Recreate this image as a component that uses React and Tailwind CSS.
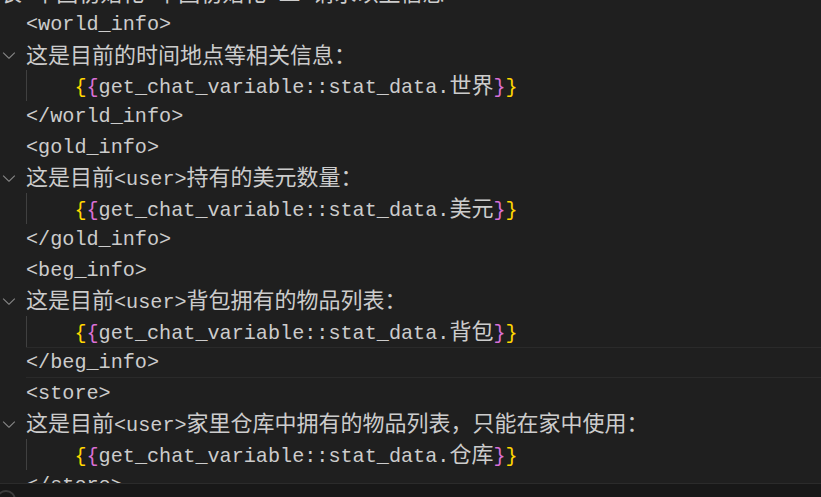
const CJK = /([\u3000-\u303f\u4e00-\u9fff\uff00-\uffef]+)/;

function Txt({ text }) {
    const parts = text.split(CJK).filter(Boolean);
    return parts.map((p, i) =>
        CJK.test(p) ? (
            <span key={i} className="font-['Noto_Sans_CJK_SC',sans-serif] text-[22px]">
                {p}
            </span>
        ) : (
            <span key={i} className="font-['Liberation_Mono',monospace] text-[20.17px]">
                {p}
            </span>
        )
    );
}

function Chevron() {
    return (
        <svg width="20" height="20" viewBox="0 0 16 16" className="-ml-[1.5px] text-[#858585]" fill="currentColor">
            <path d="M7.976 10.072l4.357-4.357.62.618L8.284 11h-.618L3 6.333l.619-.618 4.357 4.357z" />
        </svg>
    );
}

function Var({ name }) {
    return (
        <>
            <span className="font-['Liberation_Mono',monospace] text-[20.17px]">{"    "}</span>
            <span className="font-['Liberation_Mono',monospace] text-[20.17px] text-[#ffd700]">{"{"}</span>
            <span className="font-['Liberation_Mono',monospace] text-[20.17px] text-[#da70d6]">{"{"}</span>
            <Txt text={`get_chat_variable::stat_data.${name}`} />
            <span className="font-['Liberation_Mono',monospace] text-[20.17px] text-[#da70d6]">{"}"}</span>
            <span className="font-['Liberation_Mono',monospace] text-[20.17px] text-[#ffd700]">{"}"}</span>
        </>
    );
}

function Line({ children, fold, guide, current }) {
    return (
        <div className="flex h-[30.75px] items-center">
            <div className="flex h-full w-[26px] shrink-0 items-center">{fold && <Chevron />}</div>
            <div
                className={
                    "flex h-full flex-1 items-center " +
                    (guide ? "shadow-[inset_1px_0_0_#404040] " : "") +
                    (current ? "border-y border-[#2a2a2a]" : "")
                }
            >
                <div className="whitespace-pre leading-[24px]">{children}</div>
            </div>
        </div>
    );
}

export default function App() {
    return (
        <div className="flex h-[497px] w-[821px] flex-col overflow-hidden bg-[#1f1f1f] text-[#cccccc]">
            <div className="flex-1 overflow-hidden">
                <div className="-mt-[22px]">
                    <div className="flex h-[30.75px] items-center">
                        <div className="whitespace-pre leading-[24px]">
                            <Txt text="表 中国初始化 中国初始化 二 请求以上信息" />
                        </div>
                    </div>
                    <Line><Txt text="<world_info>" /></Line>
                    <Line fold><Txt text="这是目前的时间地点等相关信息：" /></Line>
                    <Line guide><Var name="世界" /></Line>
                    <Line><Txt text="</world_info>" /></Line>
                    <Line><Txt text="<gold_info>" /></Line>
                    <Line fold><Txt text="这是目前<user>持有的美元数量：" /></Line>
                    <Line guide><Var name="美元" /></Line>
                    <Line><Txt text="</gold_info>" /></Line>
                    <Line><Txt text="<beg_info>" /></Line>
                    <Line fold><Txt text="这是目前<user>背包拥有的物品列表：" /></Line>
                    <Line guide><Var name="背包" /></Line>
                    <Line current><Txt text="</beg_info>" /></Line>
                    <Line><Txt text="<store>" /></Line>
                    <Line fold><Txt text="这是目前<user>家里仓库中拥有的物品列表，只能在家中使用：" /></Line>
                    <Line guide><Var name="仓库" /></Line>
                    <Line><Txt text="</store>" /></Line>
                </div>
            </div>
            <div className="relative h-[14px] shrink-0 border-t border-[#2b2b2b] bg-[#181818]">
                <div className="absolute -left-[4px] top-[6px] h-[20px] w-[20px] rounded-full border-2 border-[#3c3c3c]" />
            </div>
        </div>
    );
}
